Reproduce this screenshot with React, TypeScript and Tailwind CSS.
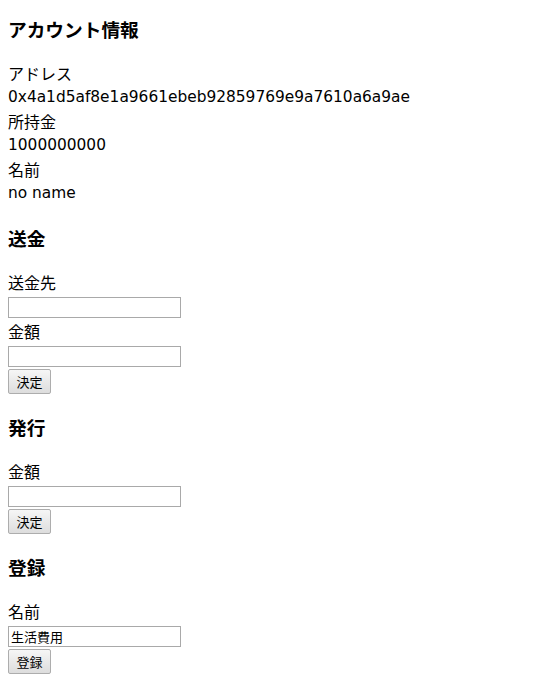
import React from 'react'

const jp = 'font-["Noto_Sans_CJK_JP","Noto_Sans",sans-serif]'
const latin = 'font-["DejaVu_Sans","Noto_Sans_CJK_JP",sans-serif]'

function Heading({ children }: { children: React.ReactNode }) {
  return <h3 className={`${jp} mt-[21px] h-6 text-[18.7px] leading-6 font-bold text-black`}>{children}</h3>
}

function Label({ children, first }: { children: React.ReactNode; first?: boolean }) {
  return <div className={`${jp} ${first ? 'mt-[20px]' : 'mt-[1px]'} h-6 text-[16px] leading-6 text-black`}>{children}</div>
}

function Field({ value }: { value?: string }) {
  return (
    <input
      type="text"
      defaultValue={value}
      className={`${jp} block mt-[3px] h-[21px] w-[173px] border border-[#a9a9a9] bg-white px-[2px] text-[13px] leading-[19px] text-black outline-none`}
    />
  )
}

function Btn({ children }: { children: React.ReactNode }) {
  return (
    <button className={`${jp} block mt-[2px] h-[25px] w-[43px] rounded-[2px] border border-[#adadad] bg-gradient-to-b from-[#f6f6f6] to-[#dddddd] text-[13px] leading-[23px] text-black`}>
      {children}
    </button>
  )
}

export default function App() {
  return (
    <div className="min-h-screen bg-white pl-2">
      <div className="-mt-1">
        <Heading>アカウント情報</Heading>
        <Label first>アドレス</Label>
        <div className={`${latin} h-6 text-[15.4px] leading-6 text-black`}>0x4a1d5af8e1a9661ebeb92859769e9a7610a6a9ae</div>
        <div className={`${jp} h-6 text-[16px] leading-6 text-black`}>所持金</div>
        <div className={`${latin} h-6 text-[15.4px] leading-6 text-black`}>1000000000</div>
        <div className={`${jp} h-6 text-[16px] leading-6 text-black`}>名前</div>
        <div className={`${latin} h-6 text-[15.4px] leading-6 text-black`}>no name</div>

        <Heading>送金</Heading>
        <Label first>送金先</Label>
        <Field />
        <Label>金額</Label>
        <Field />
        <Btn>決定</Btn>

        <Heading>発行</Heading>
        <Label first>金額</Label>
        <Field />
        <Btn>決定</Btn>

        <Heading>登録</Heading>
        <Label first>名前</Label>
        <Field value="生活費用" />
        <Btn>登録</Btn>
      </div>
    </div>
  )
}
